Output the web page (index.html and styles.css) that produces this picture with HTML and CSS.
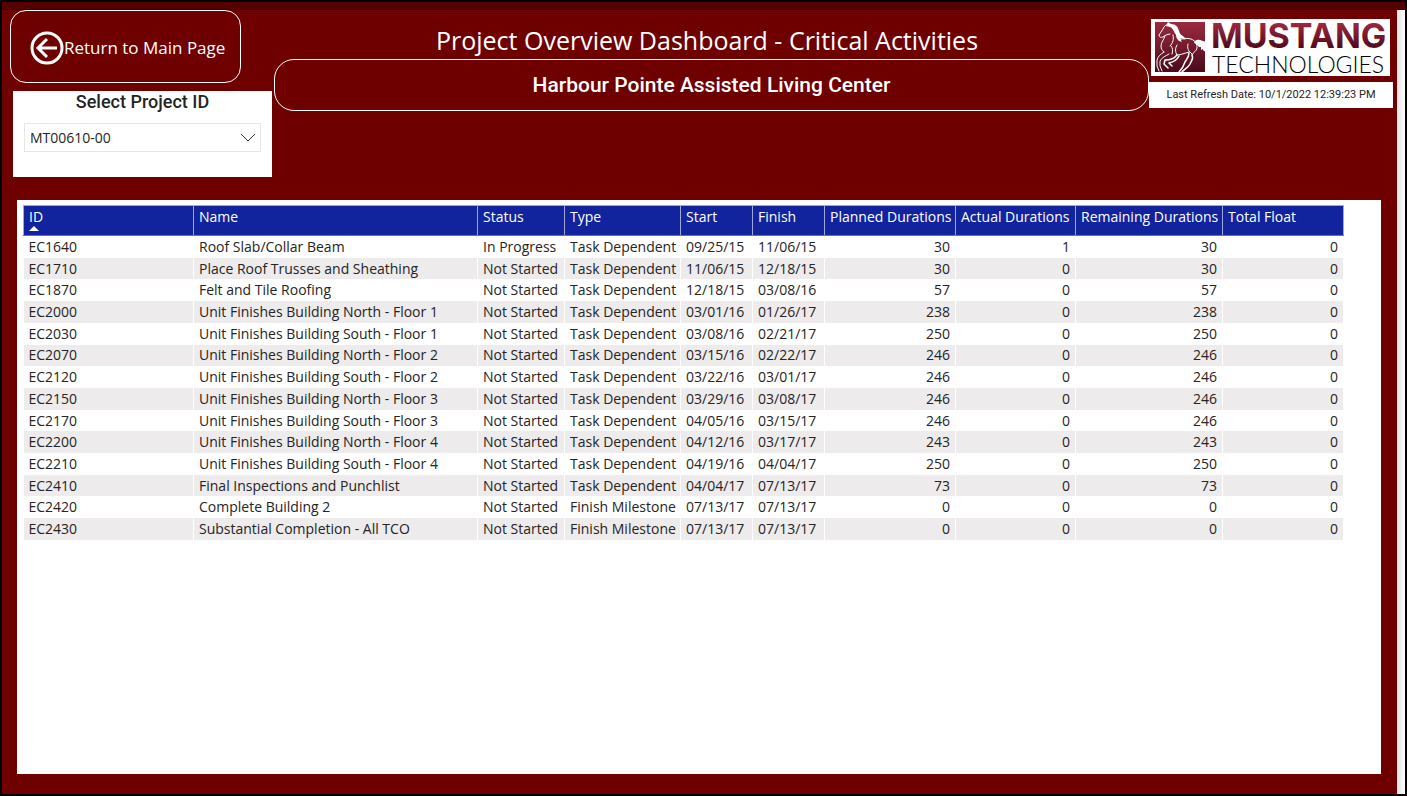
FILE: index.html
```html
<!DOCTYPE html>
<html lang="en">
<head>
  <meta charset="UTF-8">
  <title>Project Overview Dashboard</title>
  <link rel="stylesheet" href="styles.css">
</head>
<body>
  <div class="top-strip"></div>

  <div class="page">
    <main class="report">
      <header class="header">
        <div class="left">
          <button class="return" type="button">
            <svg class="return-icon" viewBox="0 0 34 34" fill="none" stroke="#fff">
              <circle cx="17" cy="17" r="15" stroke-width="3"/>
              <path d="M27 17H9M17 8l-9 9 9 9" stroke-width="3"/>
            </svg>
            <span>Return to Main Page</span>
          </button>

          <div class="slicer">
            <label for="project">Select Project ID</label>
            <div class="select-box">
              <select id="project">
                <option>MT00610-00</option>
              </select>
              <svg class="chevron" viewBox="0 0 16 9" fill="none" stroke="#333">
                <path d="M1 1l7 7 7-7"/>
              </svg>
            </div>
          </div>
        </div>

        <div class="center">
          <h1>Project Overview Dashboard - Critical Activities</h1>
          <h2>Harbour Pointe Assisted Living Center</h2>
        </div>

        <div class="right">
          <svg class="logo" viewBox="0 0 239 57" role="img" aria-label="Mustang Technologies">
            <defs>
              <linearGradient id="tile" x1="0" y1="0" x2="0" y2="1">
                <stop offset="0" stop-color="#9c2a40"/>
                <stop offset="1" stop-color="#4a0a18"/>
              </linearGradient>
              <linearGradient id="word" x1="0" y1="0" x2="0" y2="1">
                <stop offset="0.2" stop-color="#9c2840"/>
                <stop offset="0.85" stop-color="#4c0818"/>
              </linearGradient>
            </defs>
            <rect width="239" height="57" fill="#fff"/>
            <rect x="4" y="3" width="50" height="50" fill="url(#tile)"/>
            <!-- horse outline -->
            <g fill="none" stroke="#fff" stroke-linecap="round" stroke-linejoin="round">
              <path d="M17 5c-2 1-4 2-5 5l-4 6c0 2 2 3 4 2l3-2 4-1"/>
              <path d="M14 17c-1 4-4 6-4 10 0 3 1 4 3 6M22 16c1 4 0 8-3 11M20 27c2 2 2 5 1 8"/>
              <path d="M28 21c4-2 8-2 12-1 5 2 6 5 6 9 0 3-4 4-5 7"/>
              <path d="M26 36c4 0 8-2 12-3M26 26c-2 3-2 7 0 10M37 25c-1 4 0 7 4 10"/>
              <path d="M13 33c-3 2-6 4-7 8l0 6 2 5M18 35c-3 2-7 3-9 7l0 5 2 5"/>
              <path d="M26 36c-3 4-8 5-12 5l-1 4 4 4M28 37c-2 4-5 6-10 7l3 3" stroke-width="1.5"/>
              <path d="M41 36c2 4-1 6-2 9-2 4-6 5-8 8M38 34c0 4-2 6-4 9-1 3-3 7-6 10" stroke-width="1.5"/>
            </g>
            <!-- mane and tail -->
            <path fill="#fff" d="M15 7l2-4 3 2c5 0 7 3 8 7 1 3 2 4 4 5l3 3c-2 1-3 0-5-1-1 1 0 2 1 4-4-1-6-4-6-7-2-3-3-7-6-8z"/>
            <path fill="#fff" d="M43 24c1-3 3-4 6-3l6 2v9c-2 1-3-1-3-2l-2 1v-3c-3 1-3-3-7-4z"/>
            <text class="logo-name" x="60" y="29" fill="url(#word)">MUSTANG</text>
            <text class="logo-sub" x="61" y="54">TECHNOLOGIES</text>
          </svg>
          <p class="refresh">Last Refresh Date: 10/1/2022 12:39:23 PM</p>
        </div>
      </header>

      <section class="panel">
        <table>
          <colgroup>
            <col class="c-id"><col><col class="c-status"><col class="c-type">
            <col class="c-date"><col class="c-date"><col class="c-planned">
            <col class="c-actual"><col class="c-remaining"><col class="c-float">
          </colgroup>
          <thead>
            <tr>
              <th aria-sort="ascending">ID<span class="sort"></span></th>
              <th>Name</th><th>Status</th><th>Type</th><th>Start</th><th>Finish</th>
              <th>Planned Durations</th><th>Actual Durations</th><th>Remaining Durations</th><th>Total Float</th>
            </tr>
          </thead>
          <tbody>
            <tr><td>EC1640</td><td>Roof Slab/Collar Beam</td><td>In Progress</td><td>Task Dependent</td><td>09/25/15</td><td>11/06/15</td><td>30</td><td>1</td><td>30</td><td>0</td></tr>
            <tr><td>EC1710</td><td>Place Roof Trusses and Sheathing</td><td>Not Started</td><td>Task Dependent</td><td>11/06/15</td><td>12/18/15</td><td>30</td><td>0</td><td>30</td><td>0</td></tr>
            <tr><td>EC1870</td><td>Felt and Tile Roofing</td><td>Not Started</td><td>Task Dependent</td><td>12/18/15</td><td>03/08/16</td><td>57</td><td>0</td><td>57</td><td>0</td></tr>
            <tr><td>EC2000</td><td>Unit Finishes Building North - Floor 1</td><td>Not Started</td><td>Task Dependent</td><td>03/01/16</td><td>01/26/17</td><td>238</td><td>0</td><td>238</td><td>0</td></tr>
            <tr><td>EC2030</td><td>Unit Finishes Building South - Floor 1</td><td>Not Started</td><td>Task Dependent</td><td>03/08/16</td><td>02/21/17</td><td>250</td><td>0</td><td>250</td><td>0</td></tr>
            <tr><td>EC2070</td><td>Unit Finishes Building North - Floor 2</td><td>Not Started</td><td>Task Dependent</td><td>03/15/16</td><td>02/22/17</td><td>246</td><td>0</td><td>246</td><td>0</td></tr>
            <tr><td>EC2120</td><td>Unit Finishes Building South - Floor 2</td><td>Not Started</td><td>Task Dependent</td><td>03/22/16</td><td>03/01/17</td><td>246</td><td>0</td><td>246</td><td>0</td></tr>
            <tr><td>EC2150</td><td>Unit Finishes Building North - Floor 3</td><td>Not Started</td><td>Task Dependent</td><td>03/29/16</td><td>03/08/17</td><td>246</td><td>0</td><td>246</td><td>0</td></tr>
            <tr><td>EC2170</td><td>Unit Finishes Building South - Floor 3</td><td>Not Started</td><td>Task Dependent</td><td>04/05/16</td><td>03/15/17</td><td>246</td><td>0</td><td>246</td><td>0</td></tr>
            <tr><td>EC2200</td><td>Unit Finishes Building North - Floor 4</td><td>Not Started</td><td>Task Dependent</td><td>04/12/16</td><td>03/17/17</td><td>243</td><td>0</td><td>243</td><td>0</td></tr>
            <tr><td>EC2210</td><td>Unit Finishes Building South - Floor 4</td><td>Not Started</td><td>Task Dependent</td><td>04/19/16</td><td>04/04/17</td><td>250</td><td>0</td><td>250</td><td>0</td></tr>
            <tr><td>EC2410</td><td>Final Inspections and Punchlist</td><td>Not Started</td><td>Task Dependent</td><td>04/04/17</td><td>07/13/17</td><td>73</td><td>0</td><td>73</td><td>0</td></tr>
            <tr><td>EC2420</td><td>Complete Building 2</td><td>Not Started</td><td>Finish Milestone</td><td>07/13/17</td><td>07/13/17</td><td>0</td><td>0</td><td>0</td><td>0</td></tr>
            <tr><td>EC2430</td><td>Substantial Completion - All TCO</td><td>Not Started</td><td>Finish Milestone</td><td>07/13/17</td><td>07/13/17</td><td>0</td><td>0</td><td>0</td><td>0</td></tr>
          </tbody>
        </table>
      </section>
    </main>
    <div class="gutter"></div>
  </div>
</body>
</html>
```
FILE: styles.css
```css
* {
  box-sizing: border-box;
}

body {
  margin: 0;
  min-height: 100vh;
  border: 2px solid #000;
  display: flex;
  flex-direction: column;
  font-family: "Open Sans", "Noto Sans", sans-serif;
  color: #252423;
}

h1, h2, p {
  margin: 0;
  font-weight: normal;
}

.top-strip {
  height: 8px;
  background: #570000;
  border-bottom: 1px solid #1c0000;
}

.page {
  flex: 1;
  display: flex;
}

.report {
  flex: 1;
  min-width: 0;
  display: flex;
  flex-direction: column;
  background: #6e0000;
  padding-bottom: 20px;
}

.gutter {
  width: 8px;
  background: linear-gradient(90deg, #e4e4e4, #fff);
}

/* header */
.header {
  display: grid;
  grid-template-columns: 264px 1fr 244px;
  padding: 0 4px 0 8px;
}

.return {
  display: flex;
  align-items: center;
  width: 231px;
  height: 73px;
  padding: 2px 0 0 19px;
  border: 1px solid #fff;
  border-radius: 16px;
  background: none;
  color: #fff;
  font-family: inherit;
  font-size: 17px;
  white-space: nowrap;
  cursor: pointer;
}

.return-icon {
  width: 34px;
  height: 34px;
}

.slicer {
  margin: 8px 2px 0 3px;
  padding: 0 11px 25px;
  background: #fff;
}

.slicer label {
  display: block;
  font: 500 18px/22px Roboto, sans-serif;
  text-align: center;
  margin-bottom: 10px;
}

.select-box {
  position: relative;
}

.select-box select {
  display: block;
  width: 100%;
  height: 29px;
  padding: 0 5px;
  border: 1px solid #e6e6e6;
  border-radius: 0;
  background: #fff;
  color: inherit;
  font: 14px "Open Sans", sans-serif;
  appearance: none;
}

.chevron {
  position: absolute;
  right: 5px;
  top: 10px;
  width: 16px;
  height: 9px;
  pointer-events: none;
}

.center {
  color: #fff;
  text-align: center;
}

h1 {
  font-size: 25px;
  line-height: 34px;
  padding: 13px 9px 2px 0;
}

h2 {
  font: 500 21px/50px Roboto, sans-serif;
  border: 1px solid #fff;
  border-radius: 20px;
}

.right {
  padding-top: 9px;
}

.logo {
  display: block;
  width: 239px;
  height: 57px;
  margin: 0 0 6px 2px;
  overflow: visible;
}

.logo-name {
  font: 700 34px Inter, sans-serif;
}

.logo-sub {
  font: 300 23px Lato, sans-serif;
}

.refresh {
  background: #fff;
  font: 11px/26px Roboto, sans-serif;
  text-align: center;
}

/* activities */
.panel {
  flex: 1;
  margin: 23px 16px 0 15px;
  padding: 5px 37px 6px 6px;
  background: #fff;
}

table {
  width: 100%;
  height: 335px;
  table-layout: fixed;
  border-collapse: collapse;
  font-size: 14px;
  line-height: 20px;
}

.c-id { width: 170px; }
.c-status { width: 87px; }
.c-type { width: 116px; }
.c-date { width: 72px; }
.c-planned { width: 131px; }
.c-actual { width: 120px; }
.c-remaining { width: 147px; }
.c-float { width: 121px; }

thead tr {
  height: 30px;
}

th {
  padding: 1px 5px 0;
  background: #12239e;
  border: 1px solid #a0a7d8;
  border-bottom-color: #118dff;
  color: #fff;
  font-weight: normal;
  line-height: 19px;
  text-align: left;
  vertical-align: top;
  white-space: nowrap;
}

td {
  padding: 0 5px;
  border-right: 1px solid #fff;
  white-space: nowrap;
}

tbody tr:nth-child(even) {
  background: #edebeb;
}

td:nth-child(n+7) {
  text-align: right;
}

.sort {
  display: block;
  width: 0;
  border: 5px solid transparent;
  border-top-width: 0;
  border-bottom-color: #fff;
}
```
